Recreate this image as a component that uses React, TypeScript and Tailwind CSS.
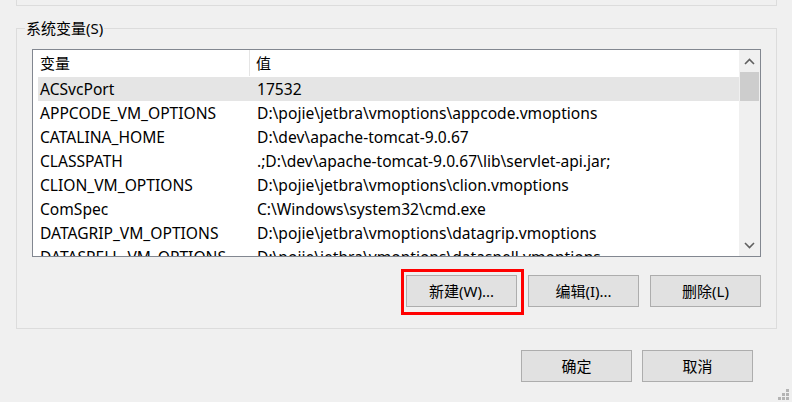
const rows: [string, string][] = [
  ['ACSvcPort', '17532'],
  ['APPCODE_VM_OPTIONS', 'D:\\pojie\\jetbra\\vmoptions\\appcode.vmoptions'],
  ['CATALINA_HOME', 'D:\\dev\\apache-tomcat-9.0.67'],
  ['CLASSPATH', '.;D:\\dev\\apache-tomcat-9.0.67\\lib\\servlet-api.jar;'],
  ['CLION_VM_OPTIONS', 'D:\\pojie\\jetbra\\vmoptions\\clion.vmoptions'],
  ['ComSpec', 'C:\\Windows\\system32\\cmd.exe'],
  ['DATAGRIP_VM_OPTIONS', 'D:\\pojie\\jetbra\\vmoptions\\datagrip.vmoptions'],
  ['DATASPELL_VM_OPTIONS', 'D:\\pojie\\jetbra\\vmoptions\\dataspell.vmoptions'],
]

function WinButton({ label }: { label: string }) {
  return (
    <button className="w-[111px] h-[32px] bg-[#e1e1e1] border border-[#adadad] text-[15px] text-black flex items-center justify-center">
      {label}
    </button>
  )
}

function Chevron({ up }: { up?: boolean }) {
  return (
    <svg width="11" height="7" viewBox="0 0 11 7" className="block">
      <path
        d={up ? 'M1 6 L5.5 1.5 L10 6' : 'M1 1 L5.5 5.5 L10 1'}
        fill="none"
        stroke="#606060"
        strokeWidth="1.6"
      />
    </svg>
  )
}

export default function App() {
  return (
    <div
      className="relative w-[792px] h-[402px] bg-[#f0f0f0] overflow-hidden text-black"
      style={{ fontFamily: '"Noto Sans", "Noto Sans CJK SC", sans-serif' }}
    >
      {/* 上一个分组框的底边 */}
      <div className="ml-[16px] w-[761px] h-[6px] border-x border-b border-[#dcdcdc]" />

      {/* 系统变量 */}
      <div className="relative ml-[16px] mt-[22px] w-[761px] h-[301px] border border-[#dcdcdc] pl-[15px] pr-[15px] pt-[20px]">
        <span className="absolute left-[8px] top-[-12px] px-[1px] bg-[#f0f0f0] text-[15px] leading-[22px]">
          系统变量(S)
        </span>

        <div className="w-[729px] h-[208px] border border-[#828790] bg-white flex overflow-hidden">
          <div className="flex-1 flex flex-col overflow-hidden">
            <div className="flex h-[27px] shrink-0 text-[15px] leading-[27px]">
              <div className="w-[217px] pl-[7px] border-r border-[#e5e5e5] h-[26px] leading-[26px]">变量</div>
              <div className="pl-[6px]">值</div>
            </div>
            {rows.map(([name, value], i) => (
              <div
                key={name}
                className={`flex h-[24px] shrink-0 ml-[5px] text-[15.6px] leading-[24px] whitespace-nowrap ${i === 0 ? 'bg-[#e5e5e5]' : ''}`}
              >
                <div className="w-[213px] pl-[2px]">{name}</div>
                <div className="pl-[6px]">{value}</div>
              </div>
            ))}
          </div>
          <div className="w-[21px] bg-[#f0f0f0] flex flex-col shrink-0">
            <div className="h-[22px] flex items-center justify-center">
              <Chevron up />
            </div>
            <div className="h-[29px] mx-[1px] bg-[#cdcdcd]" />
            <div className="flex-1" />
            <div className="h-[22px] flex items-center justify-center">
              <Chevron />
            </div>
          </div>
        </div>

        <div className="mt-[18px] flex justify-end gap-[11px] text-[15px]">
          <div className="relative">
            <WinButton label="新建(W)..." />
            <div className="absolute left-[-5px] top-[-6px] right-[-7px] bottom-[-8px] border-[3px] border-[#ff0000]" />
          </div>
          <WinButton label="编辑(I)..." />
          <WinButton label="删除(L)" />
        </div>
      </div>

      <div className="mt-[21px] pr-[39px] flex justify-end gap-[10px]">
        <WinButton label="确定" />
        <WinButton label="取消" />
      </div>

      {/* 尺寸调整手柄 */}
      <div className="absolute right-[3px] bottom-[2px] grid grid-cols-3 gap-[1px]">
        <span className="w-[3px] h-[3px]" />
        <span className="w-[3px] h-[3px]" />
        <span className="w-[3px] h-[3px] bg-[#b4b4b4]" />
        <span className="w-[3px] h-[3px]" />
        <span className="w-[3px] h-[3px] bg-[#b4b4b4]" />
        <span className="w-[3px] h-[3px] bg-[#b4b4b4]" />
        <span className="w-[3px] h-[3px] bg-[#b4b4b4]" />
        <span className="w-[3px] h-[3px] bg-[#b4b4b4]" />
        <span className="w-[3px] h-[3px] bg-[#b4b4b4]" />
      </div>
    </div>
  )
}
